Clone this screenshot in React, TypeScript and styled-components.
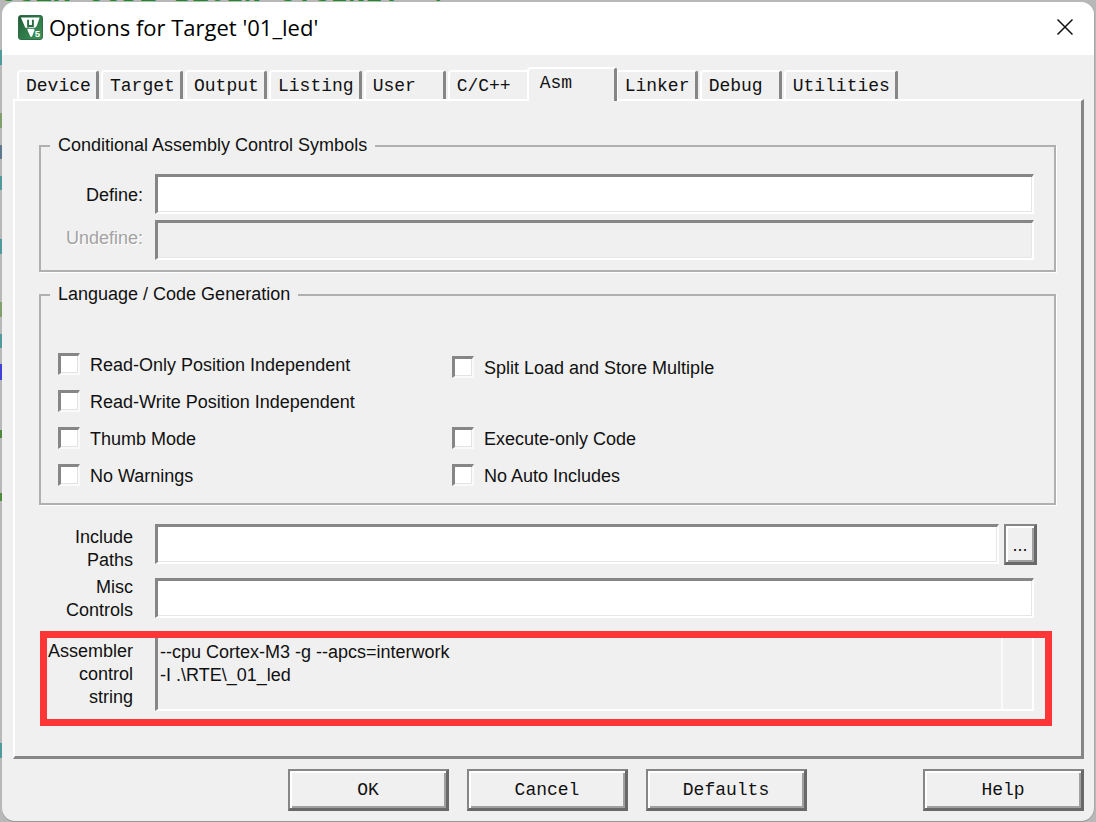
import React from "react";
import styled, { createGlobalStyle, css } from "styled-components";

const face = "#f0f0f0";
const shadow = "#a0a0a0";
const dark = "#696969";

const GlobalStyle = createGlobalStyle`
  *, *::before, *::after { box-sizing: border-box; }
  body {
    margin: 0;
    background: #b8b8b8;
    color: #111;
    font: 18px/23px "Liberation Sans", Arial, sans-serif;
  }
  button, input, textarea { font: inherit; color: inherit; margin: 0; }
`;

const Desktop = styled.div`
  position: relative;
  display: flex;
  min-height: 100vh;
  padding: 2px 2px 1px;
  overflow: hidden;
  background:
    linear-gradient(
      transparent 50px, #4f9a9a 50px 65px, transparent 65px 113px,
      #7fa06a 113px 128px, transparent 128px 145px, #5f7890 145px 159px,
      transparent 159px 176px, #4f9a9a 176px 190px, transparent 190px 239px,
      #4f9a9a 239px 254px, transparent 254px 302px, #7fa06a 302px 317px,
      transparent 317px 334px, #4f9a9a 334px 348px, transparent 348px 364px,
      #4040d8 364px 380px, transparent 380px 430px, #4f8a3a 430px 438px,
      transparent 438px 493px, #4f8a3a 493px 501px, transparent 501px 743px,
      #4f9a9a 743px 758px, transparent 758px
    ) 0 0 / 2px 100% no-repeat,
    #b8b8b8;
`;

const EditorLine = styled.div`
  position: absolute;
  top: -18px;
  left: 0;
  font: bold 29px/24px "Liberation Mono", monospace;
  white-space: pre;
  color: #1c8a2c;
`;

const Dialog = styled.main`
  position: relative;
  flex: 1;
  min-width: 0;
  display: flex;
  flex-direction: column;
  background: ${face};
  border-radius: 13px;
  overflow: hidden;
  box-shadow: 0 1px 0 #959595, 1px 0 0 #a8a8a8;
`;

const TitleBar = styled.header`
  display: flex;
  align-items: center;
  height: 53px;
  padding: 0 14px 3px 16px;
  gap: 6px;
  background: #fff;
`;

const Title = styled.h1`
  flex: 1;
  margin: 0;
  font: 22px/30px "Open Sans", "Segoe UI", sans-serif;
  color: #000;
`;

const CloseButton = styled.button`
  display: flex;
  align-items: center;
  justify-content: center;
  width: 30px;
  height: 30px;
  padding: 0;
  border: 0;
  background: none;
`;

const Tabs = styled.div`
  display: flex;
  align-items: flex-end;
  gap: 2px;
  padding: 12px 15px 0;
`;

const Tab = styled.button<{ $active: boolean }>`
  min-width: 82px;
  height: 29px;
  padding: 0 5px 0 7px;
  border: 2px solid #fff;
  border-right: 3px solid #868686;
  border-bottom: 0;
  border-radius: 4px 3px 0 0;
  background: ${face};
  font: 18px/22px "Liberation Mono", monospace;
  text-align: left;
  ${(p) =>
    p.$active &&
    css`
      position: relative;
      min-width: 90px;
      height: 34px;
      margin: 0 -3px -2px -5px;
      padding: 0 8px 4px 11px;
    `}
`;

const Panel = styled.section`
  margin: 0 10px 0 11px;
  padding: 33px 25px 30px 24px;
  border: 2px solid #fff;
  border-right: 3px solid #868686;
  border-bottom: 3px solid #868686;
`;

const Group = styled.fieldset<{ $top: number; $bottom: number }>`
  min-width: 0;
  margin: 0;
  padding: ${(p) => p.$top}px 20px ${(p) => p.$bottom}px 0;
  border: 2px solid #b0b0b0;
  box-shadow: 1px 1px 0 #fff;

  & + & {
    margin-top: 11px;
  }
`;

const Legend = styled.legend`
  margin-left: 9px;
  padding: 0 8px;
`;

const Field = styled.div<{ $label: number; $gap: number; $center?: boolean }>`
  display: grid;
  grid-template-columns: ${(p) => p.$label}px minmax(0, 1fr);
  column-gap: ${(p) => p.$gap}px;
  align-items: ${(p) => (p.$center ? "center" : "start")};

  & > label {
    padding-top: 2px;
    text-align: right;
  }
`;

const GroupFields = styled.div`
  display: flex;
  flex-direction: column;
  gap: 6px;
`;

const sunken = css`
  border: 3px solid #868686;
  border-right: 2px solid #fff;
  border-bottom: 2px solid #fff;
  border-radius: 0;
`;

const TextInput = styled.input`
  display: block;
  width: 100%;
  height: 40px;
  padding: 0 4px;
  background: #fff;
  ${sunken}
  box-shadow: inset -1px -1px 0 #e6e6e6;
  &:disabled {
    background: ${face};
  }
`;

const DisabledLabel = styled.label`
  padding-bottom: 6px;
  color: #a3a3a3;
  text-shadow: 1px 1px 0 #fff;
`;

const Options = styled.div`
  display: grid;
  grid-template-columns: 394px minmax(0, 1fr);
  padding-left: 17px;
`;

const OptionColumn = styled.div<{ $offset?: boolean }>`
  display: flex;
  flex-direction: column;
  justify-content: space-between;
  padding-top: ${(p) => (p.$offset ? 3 : 0)}px;
`;

const Option = styled.label`
  display: flex;
  align-items: center;
  gap: 10px;
  height: 37px;

  & > span {
    padding-top: 4px;
  }
`;

const CheckBox = styled.input`
  appearance: none;
  width: 22px;
  height: 22px;
  background: #fff;
  border: 3px solid #868686;
  border-right: 2px solid #fafafa;
  border-bottom: 2px solid #fafafa;
  box-shadow: inset -1px -1px 0 #e3e3e3;
`;

const Paths = styled.div`
  display: flex;
  flex-direction: column;
  gap: 2px;
  margin-top: 19px;
  padding-right: 22px;
`;

const Browse = styled.div`
  display: flex;
  gap: 5px;
  margin-right: -3px;
`;

const raised = css`
  background: ${face};
  border: 2px solid #868686;
  border-right: 3px solid ${dark};
  border-bottom: 3px solid ${dark};
  border-radius: 0;
  box-shadow: inset 2px 2px 0 #fff, inset -2px -2px 0 ${shadow};
`;

const BrowseButton = styled.button`
  flex: none;
  width: 33px;
  height: 41px;
  padding: 2px 0 0;
  ${raised}
`;

const Highlight = styled.div`
  margin: 9px 4px 0 1px;
  padding: 0 11px 0 0;
  border: 7px solid #fc3636;
`;

const ControlLabel = styled.label`
  padding-bottom: 10px;
`;

const Output = styled.div`
  display: flex;
  height: 73px;
  ${sunken}
  border-top: 0;
`;

const OutputText = styled.textarea`
  flex: 1;
  min-width: 0;
  height: 71px;
  padding: 3px 2px;
  border: 0;
  background: none;
  resize: none;
  overflow: hidden;
  white-space: pre;
`;

const ScrollTrack = styled.div`
  width: 31px;
  border-left: 2px solid #fafafa;
`;

const Footer = styled.footer`
  display: flex;
  justify-content: flex-end;
  gap: 116px;
  padding: 10px;
`;

const Actions = styled.div`
  display: flex;
  gap: 18px;
`;

const PushButton = styled.button`
  width: 161px;
  height: 42px;
  padding: 0;
  ${raised}
  font: 18px/22px "Liberation Mono", monospace;
`;

const TABS = [
  "Device", "Target", "Output", "Listing", "User",
  "C/C++", "Asm", "Linker", "Debug", "Utilities",
];

function Check({ label }: { label: string }) {
  return (
    <Option>
      <CheckBox type="checkbox" />
      <span>{label}</span>
    </Option>
  );
}

function AppIcon() {
  return (
    <svg width="25" height="25" viewBox="0 0 26 26" aria-hidden="true">
      <defs>
        <linearGradient id="g" x1="0" y1="0" x2="1" y2="1">
          <stop offset="0" stopColor="#1f5a38" />
          <stop offset="0.5" stopColor="#2f7a48" />
          <stop offset="1" stopColor="#3f9458" />
        </linearGradient>
      </defs>
      <rect x="0.5" y="0.5" width="25" height="25" rx="2.5" fill="url(#g)" stroke="#2a6642" />
      <path d="M3 2.500H22.500L19.500 11.500L16 15H17.500L14.500 22.500H13L9.500 15H10.500L7.500 13Z" fill="#fff" />
      <path d="M10.500 5V13M10.500 11.500H15.500M15.500 5V12.500" fill="none" stroke="#2a6e44" strokeWidth="2" />
      <path d="M8 13.800H18" stroke="#2a6e44" strokeWidth="1.200" />
      <text x="17.500" y="22.500" fontFamily="Liberation Sans, sans-serif" fontWeight="bold" fontSize="10" fill="#fff">5</text>
    </svg>
  );
}

export default function App() {
  return (
    <>
      <GlobalStyle />
      <Desktop>
        <EditorLine aria-hidden="true">USER CODE BEGIN SYSINIT */</EditorLine>
        <Dialog>
          <TitleBar>
            <AppIcon />
            <Title>Options for Target '01_led'</Title>
            <CloseButton aria-label="Close">
              <svg width="16" height="16" viewBox="0 0 16 16">
                <path d="M0.500 0.500L15.500 15.500M15.500 0.500L0.500 15.500" stroke="#111" strokeWidth="1.500" />
              </svg>
            </CloseButton>
          </TitleBar>
          <Tabs role="tablist">
            {TABS.map((name) => (
              <Tab key={name} role="tab" aria-selected={name === "Asm"} $active={name === "Asm"}>
                {name}
              </Tab>
            ))}
          </Tabs>
          <Panel>
            <Group $top={17} $bottom={10}>
              <Legend>Conditional Assembly Control Symbols</Legend>
              <GroupFields>
                <Field $label={102} $gap={12} $center>
                  <label htmlFor="define">Define:</label>
                  <TextInput id="define" />
                </Field>
                <Field $label={102} $gap={12} $center>
                  <DisabledLabel htmlFor="undefine">Undefine:</DisabledLabel>
                  <TextInput id="undefine" disabled />
                </Field>
              </GroupFields>
            </Group>
            <Group $top={39} $bottom={10}>
              <Legend>Language / Code Generation</Legend>
              <Options>
                <OptionColumn>
                  <Check label="Read-Only Position Independent" />
                  <Check label="Read-Write Position Independent" />
                  <Check label="Thumb Mode" />
                  <Check label="No Warnings" />
                </OptionColumn>
                <OptionColumn $offset>
                  <Check label="Split Load and Store Multiple" />
                  <div>
                    <Check label="Execute-only Code" />
                    <Check label="No Auto Includes" />
                  </div>
                </OptionColumn>
              </Options>
            </Group>
            <Paths>
              <Field $label={94} $gap={22}>
                <label htmlFor="include">
                  Include
                  <br />
                  Paths
                </label>
                <Browse>
                  <TextInput id="include" />
                  <BrowseButton aria-label="Browse include paths">...</BrowseButton>
                </Browse>
              </Field>
              <Field $label={94} $gap={22} $center>
                <label htmlFor="misc">
                  Misc
                  <br />
                  Controls
                </label>
                <TextInput id="misc" />
              </Field>
            </Paths>
            <Highlight>
              <Field $label={86} $gap={22}>
                <ControlLabel htmlFor="control">
                  Assembler
                  <br />
                  control
                  <br />
                  string
                </ControlLabel>
                <Output>
                  <OutputText
                    id="control"
                    readOnly
                    defaultValue={"--cpu Cortex-M3 -g --apcs=interwork\n-I .\\RTE\\_01_led"}
                  />
                  <ScrollTrack />
                </Output>
              </Field>
            </Highlight>
          </Panel>
          <Footer>
            <Actions>
              <PushButton>OK</PushButton>
              <PushButton>Cancel</PushButton>
              <PushButton>Defaults</PushButton>
            </Actions>
            <PushButton>Help</PushButton>
          </Footer>
        </Dialog>
      </Desktop>
    </>
  );
}
